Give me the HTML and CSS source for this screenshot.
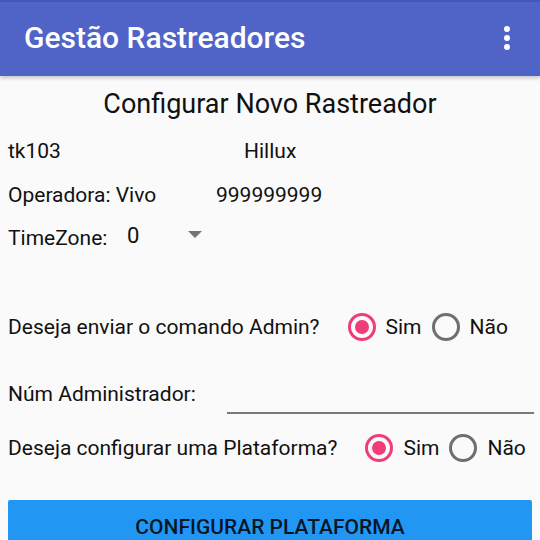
FILE: index.html
```html
<!DOCTYPE html>
<html lang="pt">
<head>
<meta charset="utf-8">
<title>Gestão Rastreadores</title>
<link rel="stylesheet" href="styles.css">
</head>
<body>
<header class="appbar">
  <span class="appbar-title">Gestão Rastreadores</span>
  <svg class="kebab" width="8" height="26" viewBox="0 0 8 26" aria-hidden="true">
    <circle cx="4" cy="4" r="3" fill="#fff"/>
    <circle cx="4" cy="13" r="3" fill="#fff"/>
    <circle cx="4" cy="22" r="3" fill="#fff"/>
  </svg>
</header>
<main class="content">
  <h1 class="page-title">Configurar Novo Rastreador</h1>
  <div class="row r1">
    <span class="col-a">tk103</span>
    <span>Hillux</span>
  </div>
  <div class="row r2">
    <span class="col-b">Operadora: Vivo</span>
    <span>999999999</span>
  </div>
  <div class="row r3">
    <span class="col-c">TimeZone:</span>
    <span class="spinner">
      <span class="spinner-value">0</span>
      <svg class="spinner-arrow" width="14" height="7" viewBox="0 0 14 7" aria-hidden="true"><path d="M0 0H14L7 7Z" fill="#757575"/></svg>
    </span>
  </div>
  <div class="row radio-row r4">
    <span class="question">Deseja enviar o comando Admin?</span>
    <span class="radio-group g1">
      <span class="radio checked"><span class="ring"></span>Sim</span>
      <span class="radio"><span class="ring"></span>Não</span>
    </span>
  </div>
  <div class="row r5">
    <span class="col-d">Núm Administrador:</span>
    <span class="field"></span>
  </div>
  <div class="row radio-row r6">
    <span class="question">Deseja configurar uma Plataforma?</span>
    <span class="radio-group g2">
      <span class="radio checked"><span class="ring"></span>Sim</span>
      <span class="radio"><span class="ring"></span>Não</span>
    </span>
  </div>
  <button class="btn" type="button">CONFIGURAR PLATAFORMA</button>
</main>
</body>
</html>
```

FILE: styles.css
```css
html, body {
  margin: 0;
  padding: 0;
}
body {
  background: #fafafa;
  font-family: Roboto, "Liberation Sans", sans-serif;
  color: #212121;
  overflow: hidden;
  height: 540px;
}
.appbar {
  box-sizing: border-box;
  height: 76px;
  background: #5064c8;
  border-top: 2px solid #4355bb;
  padding: 0 29px 0 24px;
  display: flex;
  align-items: center;
  justify-content: space-between;
  box-shadow: 0 2px 4px rgba(0, 0, 0, 0.22);
  position: relative;
  z-index: 1;
}
.appbar-title {
  color: #fff;
  font-size: 30px;
  font-weight: 500;
  line-height: 34px;
  margin-top: -2px;
}
.kebab {
  display: block;
  margin-top: -2px;
}
.content {
  padding: 0 8px;
  display: flex;
  flex-direction: column;
}
.page-title {
  margin: 12px 0 0;
  font-size: 27px;
  font-weight: 400;
  line-height: 32px;
  text-align: center;
  color: #111;
}
.row {
  display: flex;
  align-items: center;
  font-size: 21px;
  line-height: 24px;
  color: #111;
}
.r1 { margin-top: 19px; }
.r2 { margin-top: 20px; }
.r3 { margin-top: 19px; }
.col-a { width: 236px; }
.col-b { width: 208px; }
.col-c { width: 119px; }
.spinner {
  display: flex;
  align-items: center;
}
.spinner-value {
  font-size: 22px;
  width: 61px;
  margin-top: -4px;
}
.spinner-arrow {
  display: block;
  margin-top: -8px;
}
.radio-row {
  height: 40px;
}
.r4 { margin-top: 57px; }
.r6 { margin-top: 12px; }
.radio-group {
  display: flex;
  align-items: center;
  gap: 10px;
}
.g1 { margin-left: 28px; }
.g2 { margin-left: 28px; }
.radio {
  display: flex;
  align-items: center;
  gap: 10px;
}
.ring {
  box-sizing: border-box;
  width: 28px;
  height: 28px;
  border-radius: 50%;
  border: 3px solid #6f6f6f;
  display: flex;
  align-items: center;
  justify-content: center;
}
.radio.checked .ring {
  border-color: #f03c78;
}
.radio.checked .ring::after {
  content: "";
  width: 14px;
  height: 14px;
  border-radius: 50%;
  background: #f03c78;
}
.r5 {
  margin-top: 29px;
  align-items: flex-end;
  height: 40px;
}
.col-d {
  width: 219px;
  padding-bottom: 10px;
}
.field {
  flex: 1;
  margin-right: -2px;
  height: 2px;
  background: #7a7a7a;
  margin-bottom: 2px;
}
.btn {
  margin-top: 32px;
  height: 56px;
  border: 0;
  border-radius: 2px;
  background: #2196f3;
  color: rgba(0, 0, 0, 0.87);
  font-family: Roboto, "Liberation Sans", sans-serif;
  font-size: 21px;
  font-weight: 500;
  padding: 15px 0 0;
  display: flex;
  justify-content: center;
  align-items: flex-start;
  line-height: 24px;
}
```
